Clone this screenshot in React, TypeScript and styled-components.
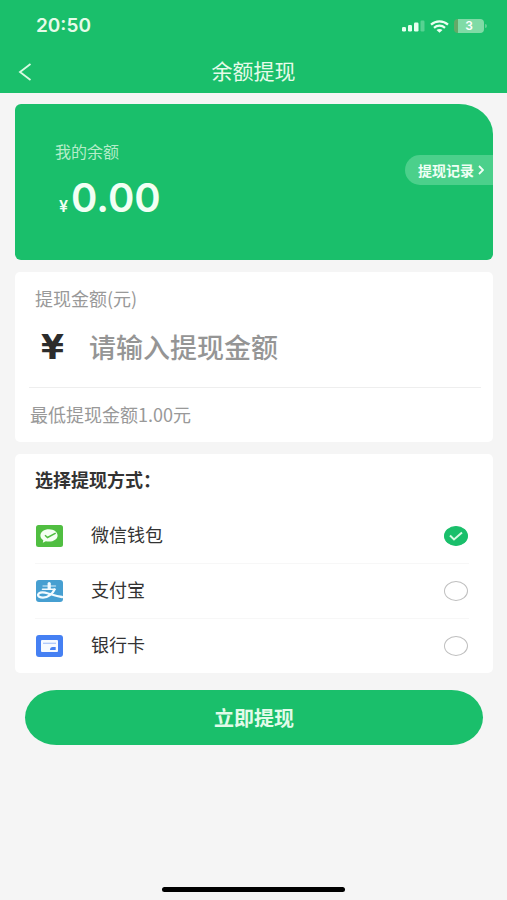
import React, { useState } from "react";
import styled, { createGlobalStyle } from "styled-components";

const green = "#1abf6b";

const GlobalStyle = createGlobalStyle`
  *, *::before, *::after { box-sizing: border-box; }
  body {
    margin: 0;
    background: #f5f5f5;
    color: #333;
    font-family: Inter, "Noto Sans CJK SC", sans-serif;
  }
  button, input { font: inherit; color: inherit; }
`;

const Page = styled.div`
  display: flex;
  flex-direction: column;
  min-height: 100vh;
`;

const Header = styled.header`
  background: ${green};
  color: #e6fbe9;
`;

const StatusBar = styled.div`
  display: flex;
  align-items: center;
  justify-content: space-between;
  height: 50px;
  padding: 2px 20px 0 36px;
`;

const Clock = styled.time`
  font-size: 19px;
  font-weight: 600;
  line-height: 24px;
`;

const StatusIcons = styled.div`
  display: flex;
  align-items: center;
  gap: 5px;
`;

const Battery = styled.div`
  display: flex;
  align-items: center;
  gap: 1px;
`;

const BatteryBody = styled.span`
  width: 30px;
  height: 14px;
  border-radius: 4px;
  background: linear-gradient(90deg, #64a968 4px, #80dba6 4px);
  color: #fff;
  font-size: 12px;
  font-weight: 600;
  line-height: 14px;
  text-align: center;
`;

const BatteryCap = styled.span`
  width: 2px;
  height: 4px;
  border-radius: 0 2px 2px 0;
  background: #5fd094;
`;

const NavBar = styled.nav`
  display: grid;
  grid-template-columns: 48px 1fr 48px;
  align-items: center;
  height: 43px;
`;

const BackButton = styled.button`
  display: flex;
  align-items: center;
  height: 40px;
  padding: 0 0 0 18px;
  border: 0;
  background: none;
`;

const Title = styled.h1`
  margin: 0;
  font-size: 21px;
  font-weight: 400;
  line-height: 28px;
  text-align: center;
`;

const Content = styled.main`
  display: flex;
  flex-direction: column;
  gap: 12px;
  padding: 11px 14px 0 15px;
`;

const BalanceCard = styled.section`
  display: flex;
  align-items: flex-start;
  justify-content: space-between;
  min-height: 156px;
  padding: 36px 0 24px 40px;
  border-radius: 6px 34px 6px 6px / 6px 30px 6px 6px;
  background: ${green};
  color: #f2fff4;
`;

const BalanceLabel = styled.div`
  color: #b4edc9;
  font-size: 16px;
  line-height: 24px;
`;

const BalanceValue = styled.div`
  display: flex;
  align-items: baseline;
  gap: 3px;
  padding: 10px 0 0 4px;
  font-size: 40px;
  font-weight: 600;
  line-height: 48px;
`;

const SmallYen = styled.span`
  font-size: 16px;
  font-weight: 600;
`;

const RecordsLink = styled.a`
  display: flex;
  align-items: center;
  gap: 4px;
  height: 30px;
  margin-top: 15px;
  padding: 0 9px 0 13px;
  border-radius: 17px 0 0 17px;
  background: #4bd08b;
  color: #f0fff5;
  font-size: 14px;
  font-weight: 700;
  text-decoration: none;
`;

const Card = styled.section`
  border-radius: 5px;
  background: #fff;
`;

const AmountCard = styled(Card)`
  padding: 13px 12px 15px 14px;
`;

const AmountLabel = styled.label`
  display: block;
  padding-left: 6px;
  color: #999;
  font-family: "Noto Sans CJK SC", sans-serif;
  font-size: 18px;
  line-height: 26px;
`;

const AmountRow = styled.div`
  display: flex;
  align-items: center;
  height: 77px;
  padding: 0 0 2px 12px;
  border-bottom: 1px solid #eee;
`;

const Yen = styled.span`
  width: 48px;
  color: #2c2c2c;
  font-family: "DejaVu Sans", sans-serif;
  font-size: 33px;
  font-weight: 700;
  line-height: 40px;
`;

const AmountInput = styled.input`
  flex: 1;
  min-width: 0;
  height: 44px;
  padding: 0;
  border: 0;
  outline: 0;
  background: none;
  font-size: 27px;
  font-weight: 500;
  &::placeholder { color: #959595; opacity: 1; }
`;

const Hint = styled.p`
  margin: 0;
  padding: 13px 0 0 1px;
  color: #999;
  font-family: "Noto Sans CJK SC", sans-serif;
  font-size: 18px;
  line-height: 26px;
`;

const MethodCard = styled(Card)`
  padding: 0 24px 0 20px;
`;

const Methods = styled.fieldset`
  min-width: 0;
  margin: 0;
  padding: 0;
  border: 0;
`;

const MethodsTitle = styled.legend`
  padding: 14px 0;
  font-size: 18px;
  font-weight: 700;
  line-height: 26px;
`;

const MethodRow = styled.label`
  display: flex;
  align-items: center;
  height: 55px;
  font-size: 18px;
  line-height: 26px;
  cursor: pointer;
  & + & { border-top: 1px solid #f7f7f7; }
`;

const MethodName = styled.span`
  flex: 1;
  padding-left: 28px;
`;

const RadioMark = styled.span`
  display: grid;
  place-items: center;
  margin-right: 1px;
  & > * { grid-area: 1 / 1; }
`;

const Radio = styled.input`
  appearance: none;
  width: 24px;
  height: 20px;
  margin: 0;
  border: 1px solid #bfbfbf;
  border-radius: 50%;
  &:checked { border-color: ${green}; background: ${green}; }
`;

const SubmitButton = styled.button`
  height: 55px;
  margin: 5px 10px 0;
  border: 0;
  border-radius: 32px / 28px;
  background: ${green};
  color: #e2fbe9;
  font-size: 20px;
  font-weight: 700;
`;

const HomeIndicator = styled.div`
  align-self: center;
  width: 36%;
  height: 5px;
  margin: auto 0 8px;
  border-radius: 3px;
  background: #000;
`;

const Signal = () => (
  <svg width="23" height="12" viewBox="0 0 23 12" fill="#e6fff0" aria-hidden="true">
    <rect x="0" y="7" width="4" height="4.5" rx="1.2" />
    <rect x="6" y="5" width="4" height="6.5" rx="1.2" />
    <rect x="12" y="2.5" width="4.5" height="9" rx="1.2" />
    <rect x="18.5" y="0.5" width="4" height="11" rx="1.2" opacity=".3" />
  </svg>
);

const Wifi = () => (
  <svg width="19" height="13" viewBox="0 0 19 13" fill="none" stroke="#eafff2" strokeWidth="2.2" aria-hidden="true">
    <path d="M1 4.6C5.8.2 13.2.2 18 4.6" />
    <path d="M4 7.8C7.2 5 11.8 5 15 7.8" />
    <path d="M6.5 10 9.5 12.8 12.5 10C10.8 8.6 8.2 8.6 6.5 10Z" fill="#eafff2" stroke="none" />
  </svg>
);

const WechatIcon = () => (
  <svg width="28" height="24" viewBox="0 0 28 24" aria-hidden="true">
    <rect x="1" y="1" width="27" height="22" rx="2.5" fill="#50be41" />
    <path d="M14 5.3c-4.9 0-8.6 2.7-8.6 6.2 0 2 1.1 3.7 2.9 4.8l-.5 2.5 3-1.6c1 .3 2 .4 3.2.4 4.9 0 8.6-2.7 8.6-6.1S18.9 5.3 14 5.3Z" fill="#f4fff2" />
    <path d="m10 11.3 2.5 2.2 8.2-4.4" fill="none" stroke="#50be41" strokeWidth="1.5" />
  </svg>
);

const AlipayIcon = () => (
  <svg width="28" height="24" viewBox="0 0 28 24" aria-hidden="true">
    <rect x="1" y="1" width="27" height="22" rx="3" fill="#469fd1" />
    <g fill="none" stroke="#f2fbff" strokeLinecap="round">
      <path d="M14.2 4.5v5" strokeWidth="3.2" />
      <path d="M8 7h12.500" strokeWidth="1.4" opacity=".6" />
      <path d="M7.5 10.2h12.500" strokeWidth="1.6" />
      <path d="M19.500 10.500c-1.800 4.200-6.500 8.200-11.500 8.200-3.300 0-5.100-1.300-4.900-3 .3-2.100 3.400-2.900 6.900-2.100 5 1.100 10 3.700 17 4.400" strokeWidth="2.300" />
    </g>
  </svg>
);

const BankCardIcon = () => (
  <svg width="28" height="24" viewBox="0 0 28 24" aria-hidden="true">
    <rect x="1" y="1" width="27" height="22" rx="3" fill="#4580f3" />
    <rect x="6" y="6" width="17" height="12" rx="1" fill="#f6faff" />
    <path d="M8 9.300h13" stroke="#adc8fb" strokeWidth="1.300" />
    <path d="M15 15.900c0-1.700 1-2.800 2.700-2.800h3v2.800Z" fill="#4580f3" />
  </svg>
);

const methods = [
  { id: "wechat", name: "微信钱包", Icon: WechatIcon },
  { id: "alipay", name: "支付宝", Icon: AlipayIcon },
  { id: "bank", name: "银行卡", Icon: BankCardIcon },
];

export default function App() {
  const [method, setMethod] = useState("wechat");
  const [amount, setAmount] = useState("");

  return (
    <Page>
      <GlobalStyle />
      <Header>
        <StatusBar>
          <Clock>20:50</Clock>
          <StatusIcons>
            <Signal />
            <Wifi />
            <Battery>
              <BatteryBody>3</BatteryBody>
              <BatteryCap />
            </Battery>
          </StatusIcons>
        </StatusBar>
        <NavBar>
          <BackButton type="button" aria-label="返回">
            <svg width="14" height="18" viewBox="0 0 14 18" fill="none" stroke="#d9fae2" strokeWidth="1.8" aria-hidden="true">
              <path d="M12.5 1 2 9l10.5 8" />
            </svg>
          </BackButton>
          <Title>余额提现</Title>
        </NavBar>
      </Header>

      <Content>
        <BalanceCard>
          <div>
            <BalanceLabel>我的余额</BalanceLabel>
            <BalanceValue>
              <SmallYen>¥</SmallYen>
              <span>0.00</span>
            </BalanceValue>
          </div>
          <RecordsLink href="#records">
            提现记录
            <svg width="6" height="10" viewBox="0 0 6 10" fill="none" stroke="currentColor" strokeWidth="1.8" aria-hidden="true">
              <path d="m1 1 4 4-4 4" />
            </svg>
          </RecordsLink>
        </BalanceCard>

        <AmountCard>
          <AmountLabel htmlFor="amount">提现金额(元)</AmountLabel>
          <AmountRow>
            <Yen>¥</Yen>
            <AmountInput
              id="amount"
              inputMode="decimal"
              placeholder="请输入提现金额"
              value={amount}
              onChange={(e) => setAmount(e.target.value)}
            />
          </AmountRow>
          <Hint>最低提现金额1.00元</Hint>
        </AmountCard>

        <MethodCard>
          <Methods>
            <MethodsTitle>选择提现方式：</MethodsTitle>
            {methods.map(({ id, name, Icon }) => (
              <MethodRow key={id}>
                <Icon />
                <MethodName>{name}</MethodName>
                <RadioMark>
                  <Radio
                    type="radio"
                    name="method"
                    value={id}
                    checked={method === id}
                    onChange={() => setMethod(id)}
                  />
                  {method === id && (
                    <svg width="14" height="10" viewBox="0 0 14 10" fill="none" stroke="#d8fbe4" strokeWidth="2" aria-hidden="true">
                      <path d="m1 4.5 4 4L13 1.5" />
                    </svg>
                  )}
                </RadioMark>
              </MethodRow>
            ))}
          </Methods>
        </MethodCard>

        <SubmitButton type="button">立即提现</SubmitButton>
      </Content>
      <HomeIndicator />
    </Page>
  );
}
